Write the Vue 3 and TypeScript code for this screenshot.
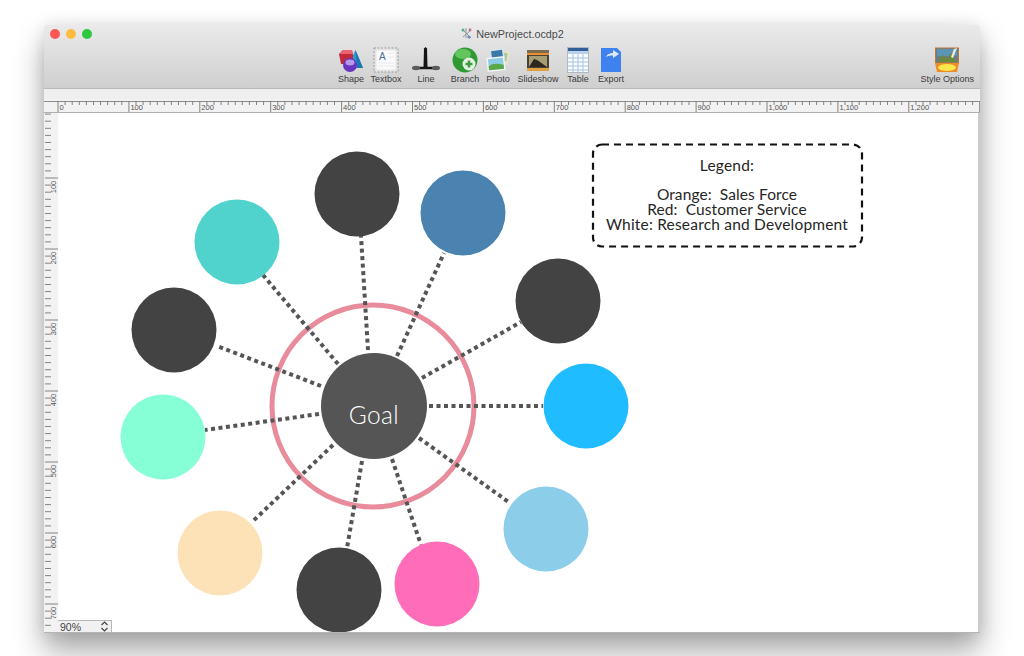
<template>
  <div class="desktop">
    <div class="window">
      <header class="toolbar">
        <div class="lights">
          <span class="light red"></span>
          <span class="light yellow"></span>
          <span class="light green"></span>
        </div>
        <div class="title">
          <svg class="doc-icon" width="13" height="13" viewBox="0 0 13 13">
            <path d="M2 2l9 9M3 10l8-7M6 1v10" stroke="#8a9a9a" stroke-width="1" fill="none" />
            <circle cx="3" cy="3" r="1.5" fill="#5aa88a" />
            <circle cx="10" cy="3" r="1.4" fill="#c46a8a" />
            <circle cx="9" cy="10" r="1.6" fill="#6a8ac4" />
          </svg>
          <span>NewProject.ocdp2</span>
        </div>
        <div class="tools">
          <div class="tool w35">
            <svg width="26" height="26" viewBox="0 0 26 26">
              <path d="M9 21L17.500 3 25 21z" fill="#2a9ad0" />
              <path d="M17.500 3L25 21h-6z" fill="#1a78b0" />
              <path d="M1 7l4-4h9l1 5v5l-4 4H3z" fill="#c22a3c" />
              <path d="M5 3h9l1 4H2z" fill="#ea6472" />
              <circle cx="12" cy="18" r="7" fill="#6a34c0" />
              <ellipse cx="12" cy="15.500" rx="4.500" ry="3" fill="#b59ae8" />
            </svg>
            <span>Shape</span>
          </div>
          <div class="tool w35">
            <svg width="26" height="26" viewBox="0 0 26 26">
              <rect x="1" y="1" width="24" height="24" fill="#e4e4e4" stroke="#9c9c9c" stroke-dasharray="2 1.500" />
              <rect x="3.500" y="3.500" width="19" height="19" fill="#fafafa" />
              <text x="6" y="13" class="icon-a">A</text>
              <path d="M5 16h16M5 19h16M15 6h6M15 10h6" stroke="#e6eaf0" />
            </svg>
            <span>Textbox</span>
          </div>
          <div class="tool w45">
            <svg width="28" height="26" viewBox="0 0 28 26">
              <path d="M12 1.500l1.500-1.500 1.500 1.500 .5 18.500h-4z" fill="#141414" />
              <path d="M3 21h22" stroke="#141414" stroke-width="2.500" />
              <ellipse cx="4" cy="21" rx="4" ry="2.200" fill="#5c5c5c" />
              <ellipse cx="24" cy="21" rx="4" ry="2.200" fill="#5c5c5c" />
            </svg>
            <span>Line</span>
          </div>
          <div class="tool w33">
            <svg width="26" height="26" viewBox="0 0 26 26">
              <circle cx="13" cy="13" r="12.500" fill="#2f9a33" />
              <ellipse cx="11" cy="7" rx="8" ry="5" fill="#64c45e" />
              <circle cx="17" cy="17" r="6.500" fill="#e6f3e4" />
              <path d="M17 13.500v7M13.500 17h7" stroke="#3c9c3c" stroke-width="2.500" />
            </svg>
            <span>Branch</span>
          </div>
          <div class="tool w33">
            <svg width="26" height="26" viewBox="0 0 26 26">
              <g transform="rotate(10 19 10)">
                <rect x="13" y="4" width="11" height="13" fill="#e8e4c8" />
                <rect x="15" y="6" width="7" height="8" fill="#a8c8a0" />
              </g>
              <g transform="rotate(-8 12 7)">
                <rect x="5" y="2" width="14" height="11" fill="#d8e4ec" />
                <rect x="6.500" y="3.500" width="11" height="7" fill="#3a78a8" />
              </g>
              <g transform="rotate(-6 11 17)">
                <rect x="2" y="10" width="18" height="14" fill="#f4f4f4" />
                <rect x="3.500" y="11.500" width="15" height="11" fill="#8ccce4" />
                <path d="M3.500 22.500v-4c4-3 9-2 15 0v4z" fill="#58a848" />
              </g>
            </svg>
            <span>Photo</span>
          </div>
          <div class="tool w47">
            <svg width="24" height="26" viewBox="0 0 24 26">
              <rect x="1" y="3" width="22" height="21" fill="#4a4234" />
              <rect x="1" y="3" width="22" height="3" fill="#7c6a4c" />
              <rect x="1" y="6" width="22" height="2" fill="#e89038" />
              <rect x="3" y="9" width="18" height="11" fill="#a89c74" />
              <path d="M3 20l5-8 3 1 3 2 7 5z" fill="#2c2820" />
              <rect x="1" y="21" width="22" height="3" fill="#e0a044" />
            </svg>
            <span>Slideshow</span>
          </div>
          <div class="tool w33">
            <svg width="22" height="26" viewBox="0 0 22 26">
              <rect x="0.500" y="0.500" width="21" height="25" fill="#f8fbff" stroke="#b0b8c4" />
              <rect x="1" y="1" width="20" height="3" fill="#2f5f96" />
              <rect x="1" y="4" width="20" height="3" fill="#bcd2ea" />
              <path d="M1 11h20M1 15h20M1 19h20M1 23h20M6 7v18M11 7v18M16 7v18" stroke="#a8c4e4" stroke-width="1" />
            </svg>
            <span>Table</span>
          </div>
          <div class="tool w33">
            <svg width="20" height="26" viewBox="0 0 20 26">
              <path d="M0 1h16l4 4v20H0z" fill="#3d82ee" />
              <path d="M5 10c1-3 4-4 7-4V3l6 4-6 4V8.500c-3 0-5 0-7 1.500z" fill="#dfe9f8" />
            </svg>
            <span>Export</span>
          </div>
          <div class="tool style-tool">
            <svg width="26" height="26" viewBox="0 0 26 26">
              <rect x="1.500" y="1" width="23" height="15" fill="#6c7c84" stroke="#b87838" />
              <path d="M3 2h20v7H3z" fill="#5c94b4" />
              <path d="M3 15l6-7 4 4 4-6 6 9z" fill="#6a8a3c" />
              <path d="M20 2l3-1-4 10-2-1z" fill="#f4e8d8" />
              <path d="M1 16h24l-2 9H3z" fill="#f08c28" />
              <ellipse cx="13" cy="20.500" rx="9" ry="3.500" fill="#fbe84a" />
            </svg>
            <span>Style Options</span>
          </div>
        </div>
      </header>

      <div class="band"></div>

      <div class="ruler-top">
        <svg width="936" height="14" viewBox="44 100 936 14">
          <path d="M44 102.500H980" stroke="#8c8c8c" />
          <path v-for="t in topTicks" :key="t.x" :d="`M${t.x} 102V${t.major ? 113 : 106}`" stroke="#777777" stroke-width="0.900" />
          <text v-for="l in topLabels" :key="l.text" :x="l.x" y="110.500" class="ruler-label">{{ l.text }}</text>
        </svg>
      </div>

      <div class="work">
        <div class="ruler-left">
          <svg width="14" height="519" viewBox="44 113 14 519">
            <path v-for="t in leftTicks" :key="t.y" :d="`M45 ${t.y}H${t.major ? 58 : 51}`" stroke="#777777" stroke-width="0.900" />
            <text
              v-for="l in leftLabels"
              :key="l.text"
              x="0"
              y="0"
              text-anchor="middle"
              class="ruler-label"
              :transform="`translate(55.500 ${l.y}) rotate(-90)`"
            >{{ l.text }}</text>
          </svg>
        </div>

        <div class="canvas">
          <svg class="diagram" width="920" height="519" viewBox="58 113 920 519">
            <circle cx="373" cy="406" r="101" fill="none" stroke="#e88c9c" stroke-width="5" />
            <line
              v-for="(s, i) in spokes"
              :key="i"
              :x1="s[0]"
              :y1="s[1]"
              :x2="s[2]"
              :y2="s[3]"
              stroke="#555555"
              stroke-width="4"
              stroke-dasharray="4 3.500"
            />
            <circle v-for="n in nodes" :key="n.x + '-' + n.y" :cx="n.x" :cy="n.y" r="42.500" :fill="n.fill" />
            <circle cx="374" cy="406" r="53" fill="#555555" />
            <text x="374" y="424" text-anchor="middle" class="goal">Goal</text>

            <rect x="593" y="144.500" width="269" height="102" rx="9" fill="#ffffff" stroke="#111111" stroke-width="2.200" stroke-dasharray="7 5" />
            <text x="727" y="171" text-anchor="middle" class="legend">Legend:</text>
            <text x="727" y="200" text-anchor="middle" class="legend tight">{{ legendOrange }}</text>
            <text x="727" y="215" text-anchor="middle" class="legend tight">{{ legendRed }}</text>
            <text x="727" y="230" text-anchor="middle" class="legend">White: Research and Development</text>
          </svg>

          <div class="zoom-box">
            <span>90%</span>
            <svg width="9" height="11" viewBox="0 0 9 11">
              <path d="M1.500 4L4.500 1l3 3M1.500 7l3 3 3-3" fill="none" stroke="#444444" stroke-width="1.200" />
            </svg>
          </div>
        </div>
      </div>
    </div>
  </div>
</template>

<script setup lang="ts">
interface DiagramNode {
  x: number
  y: number
  fill: string
}

const dark = '#434343'

const nodes: DiagramNode[] = [
  { x: 357, y: 194, fill: dark },
  { x: 463, y: 213, fill: '#4a82b0' },
  { x: 558, y: 301, fill: dark },
  { x: 586, y: 406, fill: '#1fbcff' },
  { x: 546, y: 529, fill: '#8ccdea' },
  { x: 437, y: 584, fill: '#ff6cb8' },
  { x: 339, y: 590, fill: dark },
  { x: 220, y: 553, fill: '#fde2b8' },
  { x: 163, y: 437, fill: '#86ffd6' },
  { x: 174, y: 330, fill: dark },
  { x: 237, y: 242, fill: '#50d3cd' },
]

const spokes: number[][] = [
  [368, 350, 361, 236],
  [397, 356, 444, 253],
  [422, 378, 521, 322],
  [429, 406, 543, 406],
  [419, 438, 510, 503],
  [392, 459, 421, 545],
  [362, 461, 347, 548],
  [333, 445, 252, 522],
  [319, 414, 205, 430],
  [321, 386, 217, 346],
  [338, 364, 263, 275],
]

// the template compiler collapses double spaces, so these go in as bindings
const legendOrange = 'Orange:  Sales Force'
const legendRed = 'Red:  Customer Service'

const step = 7.09

const topTicks = Array.from({ length: 131 }, (_, i) => ({
  x: +(58 + i * step).toFixed(1),
  major: i % 10 === 0,
})).filter((t) => t.x < 980)

const topLabels = Array.from({ length: 13 }, (_, i) => {
  const value = i * 100
  return {
    x: +(59.5 + i * step * 10).toFixed(1),
    text: value >= 1000 ? `1,${String(value - 1000).padStart(3, '0')}` : String(value),
  }
})

const leftTicks = Array.from({ length: 74 }, (_, i) => ({
  y: +(107 + i * 7.1).toFixed(1),
  major: i % 10 === 0,
})).filter((t) => t.y > 113)

const leftLabels = [100, 200, 300, 400, 500, 600, 700].map((value) => ({
  text: String(value),
  y: 116 + value * 0.71,
}))
</script>

<style>
html,
body {
  background: #ffffff;
}
</style>

<style scoped>
.desktop {
  height: 656px;
  box-sizing: border-box;
  padding: 25px 44px 23px;
  overflow: hidden;
  font-family: "Liberation Sans", Arial, sans-serif;
}

.window {
  height: 608px;
  display: flex;
  flex-direction: column;
  position: relative;
  border-radius: 4px 4px 0 0;
  box-shadow: 0 18px 30px rgba(0, 0, 0, 0.34), 0 0 16px rgba(0, 0, 0, 0.1);
  background: #f0f0f0;
}

.toolbar {
  height: 64px;
  box-sizing: border-box;
  position: relative;
  background: linear-gradient(#ebeaeb, #d0cfd0);
  border-bottom: 1px solid #b8b8b8;
  border-radius: 4px 4px 0 0;
}

.lights {
  position: absolute;
  left: 6px;
  top: 4px;
  display: flex;
  gap: 6px;
}

.light {
  width: 10px;
  height: 10px;
  border-radius: 50%;
}

.light.red {
  background: #fc5753;
}

.light.yellow {
  background: #fdbc40;
}

.light.green {
  background: #2bc840;
}

.title {
  display: flex;
  justify-content: center;
  align-items: center;
  gap: 3px;
  padding-top: 2px;
  height: 13px;
  font-size: 10.8px;
  color: #4a4a4a;
}

.tools {
  display: flex;
  padding-left: 289.5px;
  padding-top: 7px;
}

.tool {
  display: flex;
  flex-direction: column;
  align-items: center;
  font-size: 9px;
  line-height: 11px;
  color: #3a3a3a;
  white-space: nowrap;
}

.tool svg {
  display: block;
  height: 26px;
  margin-bottom: 1px;
}

.w33 {
  width: 33px;
}

.w35 {
  width: 35px;
}

.w45 {
  width: 45px;
}

.w47 {
  width: 47px;
}

.style-tool {
  margin-left: auto;
  margin-right: 6px;
}

.icon-a {
  font-family: "Liberation Sans", Arial, sans-serif;
  font-size: 10px;
  fill: #4a6a9a;
}

.band {
  height: 10px;
  background: #efefef;
}

.ruler-top {
  height: 14px;
  background: #f2f2f2;
  border-bottom: 1px solid #b0b0b0;
  box-sizing: border-box;
}

.ruler-top svg,
.ruler-left svg,
.diagram {
  display: block;
}

.ruler-label {
  font-family: "Liberation Sans", Arial, sans-serif;
  font-size: 7.5px;
  fill: #555555;
}

.work {
  flex: 1;
  min-height: 0;
  display: flex;
  border-bottom: 1px solid #b4b4b4;
}

.ruler-left {
  width: 14px;
  background: #f2f2f2;
  overflow: hidden;
}

.canvas {
  flex: 1;
  position: relative;
  background: #ffffff;
  border-right: 2px solid #cccccc;
  overflow: hidden;
}

.goal {
  font-family: Lato, "Open Sans", sans-serif;
  font-size: 24.5px;
  font-weight: 300;
  letter-spacing: 0.4px;
  fill: #ffffff;
}

.legend {
  font-family: Lato, "Open Sans", sans-serif;
  font-size: 15.5px;
  letter-spacing: 0.2px;
  fill: #262626;
  white-space: pre;
}

.legend.tight {
  letter-spacing: 0.1px;
}

.zoom-box {
  position: absolute;
  left: 0;
  bottom: 0;
  width: 54px;
  height: 12px;
  box-sizing: border-box;
  padding: 0 2px;
  display: flex;
  align-items: center;
  justify-content: space-between;
  background: #f1f1f1;
  border-top: 1px solid #b8b8b8;
  border-right: 1px solid #b8b8b8;
  font-size: 10.5px;
  color: #444444;
}
</style>
